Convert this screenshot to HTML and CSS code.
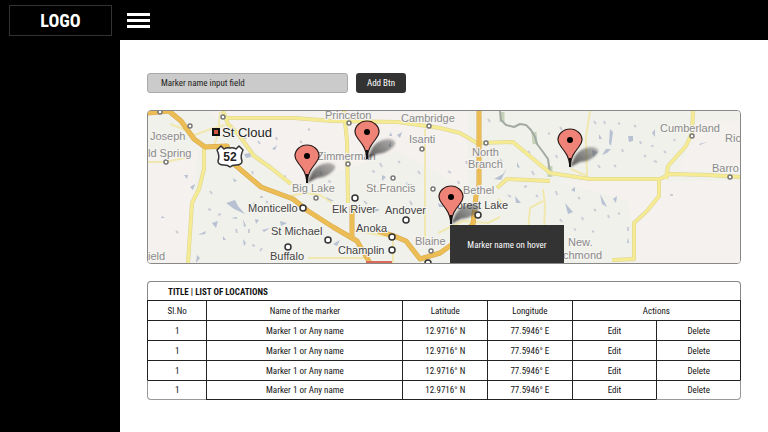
FILE: index.html
```html
<!DOCTYPE html>
<html lang="en">
<head>
    <meta charset="UTF-8">
    <meta name="viewport" content="width=device-width, initial-scale=1.0">
    <title>Locations</title>
    <link rel="stylesheet" href="styles.css">
</head>
<body>
    <header class="topbar">
        <div class="brand"><a href="#" class="logo">LOGO</a></div>
        <button type="button" class="menu-btn" aria-label="Toggle menu">
            <span></span>
            <span></span>
            <span></span>
        </button>
    </header>

    <div class="layout">
        <nav class="sidebar" aria-label="Main"></nav>

        <main class="content">
            <form class="add-form">
                <input type="text" class="marker-input" aria-label="Marker name" placeholder="Marker name input field">
                <button type="button" class="add-btn">Add Btn</button>
            </form>

            <div class="map">
                <svg class="map-svg" viewBox="0 0 592 152" preserveAspectRatio="xMidYMid slice" role="img" aria-label="Map">
                    <defs>
                        <linearGradient id="shade" x1="0" y1="1" x2="1" y2="0">
                            <stop offset="0" stop-color="#222" stop-opacity="0.8"/>
                            <stop offset="1" stop-color="#555" stop-opacity="0.4"/>
                        </linearGradient>
                        <filter id="soft">
                            <feGaussianBlur stdDeviation="1"/>
                        </filter>
                        <g id="pin">
                            <path fill="url(#shade)" filter="url(#soft)" d="M0 0L5 -11Q10 -19 21 -20Q31 -19 27 -13Q21 -6 10 -5Z"/>
                            <path class="pin-body" d="M0 -1 C-1 -10 -4 -14 -8 -19 C-10 -22 -12 -24 -12 -27 A12 11 0 0 1 12 -27 C12 -24 10 -22 8 -19 C4 -14 1 -10 0 -1 Z"/>
                            <path class="pin-tip" d="M0 -9 V0"/>
                            <circle cx="0" cy="-27" r="3"/>
                        </g>
                    </defs>

                    <rect class="land" width="592" height="152"/>
                    <path class="farmland" d="M0 40H50L38 152H0Z M60 0H320V80L250 40L150 75Z M410 70H592V152H490L480 90Z M550 10H592V60H530Z"/>

                    <!-- lakes -->
                    <g class="lakes">
                        <path d="M78 92l9 -3 3 6 7 8 -11 -5z M64 112l6 -2 -2 7z M50 124l8 -4 -1 3z M83 107l6 -1 0 2z M95 108l3 7 -2 1z M75 125l3 4 -3 0z M107 108l4 1 -3 4z M114 119l8 -2 -6 4z M95 128l3 4 -2 3z"/>
                        <path d="M96 43l6 -1 1 4 -5 1z M36 64l4 0 -1 4z M42 76l5 -3 -2 6z M124 38l5 -4 -2 5z M85 67l4 3 -3 1z M14 105l3 2 -4 0z M49 144l3 3 -4 5z M134 66l4 -2 -1 5z"/>
                        <path d="M462 18l3 3 -2 14 -2 -3z M451 23l3 5 -3 0z M480 25l5 0 0 5 -4 1z M463 38l-4 4 -5 2 4 -6z M444 39l6 2 -5 5z M452 83l5 9 2 4 -5 -3z M465 88l4 -3 -1 7z M502 35l4 -1 -1 2z M551 33l8 -2 -7 3z M504 22l3 -4 0 8z M480 126l1 6 -2 0z"/>
                        <path d="M346 68l9 -5 4 -6 -6 12z M369 51l3 6 -3 -1z M240 35l3 -5 0 6z M249 24l5 -3 -2 6z M241 25l2 -4 1 4z M226 96l6 3 -5 2z M258 71l7 3 -6 1z M185 133l7 -4 -3 6z M178 86l8 4 -6 0z M417 92l8 9 -5 2z M423 79l4 -3 0 5z M367 85l6 7 -5 0z M339 120l8 3 -8 3z M238 66l-4 4 0 -6z M132 110l7 2 -6 3z M290 92l7 4 -6 0z"/>
                    </g>
                    <path class="ponds" d="M62 80l2 3 M70 104l3 -1 M88 118l1 4 M101 118l0 4 M104 134l3 1 M112 140l2 -3 M60 98l3 1 M118 90l2 2 M105 92l2 1 M28 120l2 2 M110 30l2 3 M118 20l2 2 M128 26l1 3 M96 26l2 2 M104 60l1 3 M112 86l3 0 M152 30l2 2 M160 18l2 1 M172 60l2 4 M180 70l3 1 M232 52l2 4 M224 60l3 1 M250 50l2 2 M216 90l3 3 M262 90l2 4 M270 60l2 3 M300 60l3 2 M310 70l1 3 M352 48l2 3 M360 84l3 2 M384 60l2 4 M376 76l3 -1 M388 84l2 2 M408 80l1 4 M412 108l2 3 M404 120l3 1 M430 86l2 2 M434 106l1 3 M426 118l2 1 M446 10l2 3 M456 10l1 3 M470 12l2 1 M474 38l1 3 M486 14l2 2 M492 30l1 3 M496 44l2 2 M506 50l3 1 M466 54l2 2 M450 54l2 3 M444 120l2 1 M446 98l2 2 M460 104l1 3 M470 102l2 1 M480 116l0 4 M516 40l2 2 M526 28l1 2 M530 64l3 -1 M522 84l3 0 M412 16l2 3 M400 22l2 1 M408 44l1 3 M340 8l2 3 M318 50l1 3 M380 40l2 2"/>

                    <!-- st croix river -->
                    <path class="river-bank" d="M354 1V11 M386 21L387 33 M402 55V66"/>
                    <path class="river" d="M352 0L353 9L358 14L366 16L372 13L378 14L383 19L387 26L389 33L395 41L400 48L402 62"/>

                    <!-- minor roads -->
                    <g class="roads-thin">
                        <path d="M22 13L38 19L47 24L60 19L77 14 M65 38L70 23L72 1 M0 51H18L40 46"/>
                        <path d="M277 18V132 M142 85L157 82L172 84L184 92 M202 118L230 124L245 126V152"/>
                        <path d="M395 78L397 94L396 120 M395 90L382 97L380 120 M350 88L360 96 M423 58L439 65L438 26L442 0"/>
                        <path d="M160 147H220 M290 122L315 110L340 112L352 106"/>
                    </g>

                    <!-- highways -->
                    <path class="road-edge" d="M75 0L80 13L91 24L106 45L123 57L143 73 M79 7H146L185 10L250 11L292 17L312 22L329 32L365 31L402 62L442 68H512L522 63L560 64L592 66 M56 38V58L51 78L44 92L40 152 M196 0L199 30L200 92 M349 77L359 68L402 70 M545 0L544 22L538 35L520 55L518 68 M511 68V85L499 100L486 112V148L464 149"/>
                    <path class="road" d="M75 0L80 13L91 24L106 45L123 57L143 73 M79 7H146L185 10L250 11L292 17L312 22L329 32L365 31L402 62L442 68H512L522 63L560 64L592 66 M56 38V58L51 78L44 92L40 152 M196 0L199 30L200 92 M349 77L359 68L402 70 M545 0L544 22L538 35L520 55L518 68 M511 68V85L499 100L486 112V148L464 149"/>

                    <!-- interstates -->
                    <path class="freeway-edge" d="M0 2L21 0L33 10L46 28L57 36L79 35L86 53L113 76L145 88L160 100L185 116L209 130L222 152 M204 95V127 M230 120L246 125L258 130L272 148L292 142L306 132L325 113L328 85L331 73V0"/>
                    <path class="freeway" d="M0 2L21 0L33 10L46 28L57 36L79 35L86 53L113 76L145 88L160 100L185 116L209 130L222 152 M204 95V127 M230 120L246 125L258 130L272 148L292 142L306 132L325 113L328 85L331 73V0"/>
                    <path class="loop" d="M218 151H244"/>

                    <!-- town dots -->
                    <g class="towns">
                        <circle cx="12" cy="1" r="2"/>
                        <circle cx="42" cy="15" r="2"/>
                        <circle cx="75" cy="6" r="2"/>
                        <circle cx="18" cy="51" r="2"/>
                        <circle cx="201" cy="12" r="2"/>
                        <circle cx="281" cy="15" r="2"/>
                        <circle cx="274" cy="38" r="2"/>
                        <circle cx="200" cy="53" r="2"/>
                        <circle cx="245" cy="67" r="2"/>
                        <circle cx="168" cy="87" r="2"/>
                        <circle cx="338" cy="32" r="2"/>
                        <circle cx="544" cy="25" r="2"/>
                        <circle cx="582" cy="66" r="2"/>
                        <circle cx="285" cy="78" r="2"/>
                        <circle cx="283" cy="140" r="2"/>
                    </g>
                    <g class="towns towns-major">
                        <circle cx="155" cy="97" r="3"/>
                        <circle cx="207" cy="87" r="3"/>
                        <circle cx="258" cy="109" r="3"/>
                        <circle cx="244" cy="126" r="3"/>
                        <circle cx="244" cy="139" r="3"/>
                        <circle cx="180" cy="129" r="3"/>
                        <circle cx="140" cy="136" r="3"/>
                        <circle cx="330" cy="104" r="3"/>
                        <circle cx="280" cy="152" r="3"/>
                    </g>
                    <rect class="city" x="65" y="18" width="6" height="6"/>

                    <!-- route shield -->
                    <path class="shield" d="M73 35L76 38Q79 36 82 37Q85 36 88 38L91 35L95 39Q92 45 94 50Q94 54 88 54Q84 54 82 56Q80 54 76 54Q70 54 70 50Q72 45 69 39Z"/>
                    <text class="shield-no" x="82" y="50">52</text>

                    <g class="labels">
                        <text x="2" y="29">Joseph</text>
                        <text x="0" y="46">ld Spring</text>
                        <text x="177" y="8">Princeton</text>
                        <text x="253" y="11">Cambridge</text>
                        <text x="261" y="32">Isanti</text>
                        <text x="169" y="49">Zimmerman</text>
                        <text x="144" y="81">Big Lake</text>
                        <text x="218" y="81">St.Francis</text>
                        <text x="324" y="45">North</text>
                        <text x="320" y="57">Branch</text>
                        <text x="315" y="83">Bethel</text>
                        <text x="512" y="21">Cumberland</text>
                        <text x="577" y="31">Ric</text>
                        <text x="564" y="61">Barro</text>
                        <text x="0" y="149">ield</text>
                        <text x="267" y="134">Blaine</text>
                        <text x="420" y="135">New.</text>
                        <text x="415" y="148">chmond</text>
                    </g>
                    <g class="labels labels-major">
                        <text x="100" y="101">Monticello</text>
                        <text x="123" y="124">St Michael</text>
                        <text x="122" y="149">Buffalo</text>
                        <text x="184" y="102">Elk River</text>
                        <text x="237" y="103">Andover</text>
                        <text x="208" y="121">Anoka</text>
                        <text x="190" y="143">Champlin</text>
                        <text x="302" y="98">Forest Lake</text>
                    </g>
                    <text class="city-label" x="74" y="26">St Cloud</text>

                    <use href="#pin" x="159" y="72"/>
                    <use href="#pin" x="219" y="48"/>
                    <use href="#pin" x="422" y="56"/>
                    <use href="#pin" x="303" y="113"/>
                </svg>
                <div class="tooltip" role="tooltip">Marker name on hover</div>
            </div>

            <section class="locations">
                <h2 class="list-title">TITLE | LIST OF LOCATIONS</h2>
                <table class="list">
                    <colgroup>
                        <col class="col-no">
                        <col class="col-name">
                        <col class="col-sm">
                        <col class="col-sm">
                        <col class="col-sm">
                        <col class="col-sm">
                    </colgroup>
                    <thead>
                        <tr>
                            <th>Sl.No</th>
                            <th>Name of the marker</th>
                            <th>Latitude</th>
                            <th>Longitude</th>
                            <th colspan="2">Actions</th>
                        </tr>
                    </thead>
                    <tbody>
                        <tr>
                            <td>1</td>
                            <td>Marker 1 or Any name</td>
                            <td>12.9716° N</td>
                            <td>77.5946° E</td>
                            <td><button type="button">Edit</button></td>
                            <td><button type="button">Delete</button></td>
                        </tr>
                        <tr>
                            <td>1</td>
                            <td>Marker 1 or Any name</td>
                            <td>12.9716° N</td>
                            <td>77.5946° E</td>
                            <td><button type="button">Edit</button></td>
                            <td><button type="button">Delete</button></td>
                        </tr>
                        <tr>
                            <td>1</td>
                            <td>Marker 1 or Any name</td>
                            <td>12.9716° N</td>
                            <td>77.5946° E</td>
                            <td><button type="button">Edit</button></td>
                            <td><button type="button">Delete</button></td>
                        </tr>
                        <tr>
                            <td>1</td>
                            <td>Marker 1 or Any name</td>
                            <td>12.9716° N</td>
                            <td>77.5946° E</td>
                            <td><button type="button">Edit</button></td>
                            <td><button type="button">Delete</button></td>
                        </tr>
                    </tbody>
                </table>
            </section>
        </main>
    </div>
</body>
</html>
```
FILE: styles.css
```css
* {
    box-sizing: border-box;
}
body {
    margin: 0;
    min-height: 100vh;
    display: flex;
    flex-direction: column;
    background: #fff;
    color: #111;
    font-family: "Roboto Condensed", Roboto, sans-serif;
    font-size: 9px;
    line-height: 12px;
}
button, input {
    font: inherit;
    color: inherit;
}
button {
    cursor: pointer;
}

/* header */
.topbar {
    display: flex;
    align-items: center;
    height: 40px;
    background: #000;
}
.brand {
    width: 120px;
    padding: 0 8px 0 9px;
}
.logo {
    display: block;
    height: 31px;
    border: 1px solid #333;
    color: #fff;
    font-size: 18px;
    font-weight: bold;
    line-height: 29px;
    text-align: center;
    text-decoration: none;
}
.menu-btn {
    display: flex;
    flex-direction: column;
    gap: 3px;
    width: 37px;
    padding: 0 7px;
    border: 0;
    background: none;
}
.menu-btn span {
    height: 3px;
    background: #fff;
}

.layout {
    flex: 1;
    display: flex;
}
.sidebar {
    flex: 0 0 120px;
    background: #000;
}
.content {
    flex: 1;
    min-width: 0;
    padding: 33px 27px 24px;
}

/* add marker */
.add-form {
    display: flex;
    gap: 8px;
    margin-bottom: 17px;
}
.marker-input {
    width: 201px;
    height: 20px;
    padding: 0 13px;
    border: 1px solid #aaa;
    border-radius: 3px;
    background: #cbcbcb;
}
.marker-input::placeholder {
    color: #222;
    opacity: 1;
}
.add-btn {
    width: 50px;
    height: 20px;
    padding: 0;
    border: 0;
    border-radius: 3px;
    background: #333;
    color: #fff;
}

/* map */
.map {
    position: relative;
    overflow: hidden;
    margin-bottom: 17px;
    border: 1px solid #888;
    border-radius: 4px;
}
.map-svg {
    display: block;
    width: 100%;
    font-family: "Liberation Sans", Arial, sans-serif;
}
.map-svg path {
    stroke-linejoin: round;
}
.land {
    fill: #f1f1ec;
}
.farmland {
    fill: #f5f1ee;
}
.lakes {
    fill: #b7c1d2;
}
.ponds {
    fill: none;
    stroke: #c9cdd6;
    stroke-width: 2;
}
.river {
    fill: none;
    stroke: #a3aaa3;
    stroke-width: 2;
}
.river-bank {
    fill: none;
    stroke: #c5d2b8;
    stroke-width: 5;
}
.roads-thin {
    fill: none;
    stroke: #f0e8ae;
    stroke-width: 2;
}
.road-edge {
    fill: none;
    stroke: #dcd394;
    stroke-width: 4;
}
.road {
    fill: none;
    stroke: #f5eb93;
    stroke-width: 3;
}
.freeway-edge {
    fill: none;
    stroke: #d5a848;
    stroke-width: 5;
}
.freeway {
    fill: none;
    stroke: #edbd55;
    stroke-width: 4;
}
.loop {
    stroke: #d86a5c;
    stroke-width: 2;
}
.towns {
    fill: #fff;
    stroke: #777;
    stroke-width: 1.5;
}
.towns-major {
    stroke: #333;
}
.city {
    fill: #d0563f;
    stroke: #111;
    stroke-width: 2;
}
.shield {
    fill: #fff;
    stroke: #333;
    stroke-width: 1.5;
}
.shield-no {
    font-size: 12px;
    font-weight: bold;
    text-anchor: middle;
    fill: #222;
}
.labels {
    font-size: 11px;
    fill: #8a8a8a;
    stroke: #f6f5f1;
    stroke-width: 2px;
    paint-order: stroke;
}
.labels-major {
    fill: #444;
}
.city-label {
    font-size: 13px;
    fill: #222;
    stroke: #f6f5f1;
    stroke-width: 2px;
    paint-order: stroke;
}
.pin-body {
    fill: #f08378;
    stroke: #2b1a18;
    stroke-width: 1.2;
}
.pin-tip {
    stroke: #111;
    stroke-width: 2;
}
.tooltip {
    position: absolute;
    left: 51%;
    bottom: 0;
    width: 114px;
    height: 38px;
    background: #333;
    color: #fff;
    line-height: 40px;
    text-align: center;
}

/* list of locations */
.list-title {
    height: 19px;
    margin: 0;
    padding: 0 20px;
    border: 1px solid #888;
    border-bottom: 0;
    border-radius: 4px 4px 0 0;
    font-size: 9px;
    font-weight: bold;
    line-height: 20px;
}
.list {
    width: 100%;
    table-layout: fixed;
    border-collapse: separate;
    border-spacing: 0;
}
.col-no {
    width: 10%;
}
.col-name {
    width: 33%;
}
.list th,
.list td {
    height: 20px;
    padding: 0;
    border-top: 1px solid #222;
    border-left: 1px solid #222;
    font-weight: normal;
    text-align: center;
}
.list th:last-child,
.list td:last-child {
    border-right: 1px solid #222;
}
.list tbody tr:last-child td {
    border-bottom: 1px solid #222;
}
.list tbody tr:last-child td:first-child {
    border-left-color: #999;
    border-bottom-color: #999;
    border-radius: 0 0 0 4px;
}
.list tbody tr:last-child td:last-child {
    border-right-color: #999;
    border-bottom-color: #999;
    border-radius: 0 0 4px 0;
}
.list button {
    padding: 0;
    border: 0;
    background: none;
}
```
